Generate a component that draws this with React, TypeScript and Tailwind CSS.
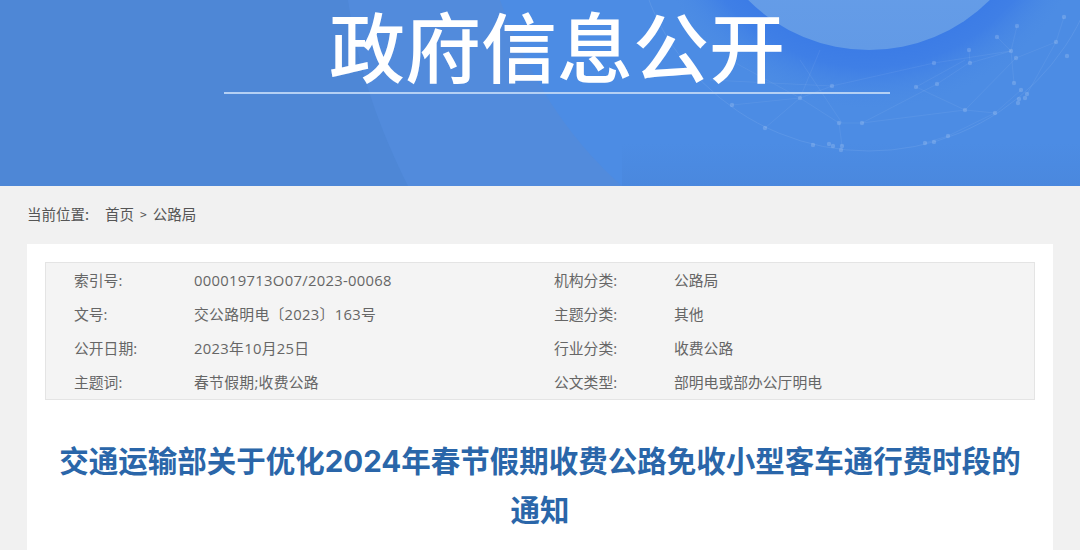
import * as React from "react";

const dots: [number, number][] = [
  [1064, 17], [1017, 26], [997, 37], [1056, 42], [969, 50], [1011, 51], [1016, 58], [934, 63], [970, 63],
  [1067, 56], [1014, 83], [832, 86], [916, 87], [937, 84], [1021, 90], [1027, 94], [1019, 99], [1025, 98],
  [1018, 103], [800, 98], [732, 105], [965, 110], [995, 113], [839, 123], [862, 123], [765, 128], [948, 136],
  [813, 145], [829, 144], [833, 146], [842, 146], [841, 150], [925, 143], [934, 142],
];

const links: [number, number, number, number][] = [
  [800, 98, 839, 123], [800, 98, 765, 128], [839, 123, 842, 146], [839, 123, 862, 123], [862, 123, 937, 84],
  [862, 123, 965, 110], [832, 86, 934, 63], [832, 86, 800, 98], [934, 63, 1011, 51], [970, 63, 1011, 51],
  [1011, 51, 1014, 83], [1016, 58, 965, 110], [970, 63, 969, 50], [937, 84, 969, 63], [965, 110, 995, 113],
  [995, 113, 1021, 90], [916, 87, 965, 110], [1017, 26, 1011, 51], [997, 37, 1011, 51], [1056, 42, 1016, 58],
  [1056, 42, 1064, 17], [1056, 42, 1027, 94], [732, 105, 800, 98], [948, 136, 995, 113], [925, 143, 948, 136],
  [842, 123, 800, 60], [800, 98, 820, 50], [916, 87, 965, 60], [710, 80, 832, 86], [730, 60, 800, 98],
];

const meta = [
  ["索引号:", "000019713O07/2023-00068", "机构分类:", "公路局"],
  ["文号:", "交公路明电〔2023〕163号", "主题分类:", "其他"],
  ["公开日期:", "2023年10月25日", "行业分类:", "收费公路"],
  ["主题词:", "春节假期;收费公路", "公文类型:", "部明电或部办公厅明电"],
];

function BannerArt() {
  return (
    <svg className="absolute inset-0 h-[186px] w-[1080px]" viewBox="0 0 1080 186" fill="none">
      <defs>
        <linearGradient id="sun" x1="0" y1="0" x2="0" y2="1">
          <stop offset="0" stopColor="#72a8ee" />
          <stop offset="1" stopColor="#629ae6" />
        </linearGradient>
        <radialGradient id="halo" gradientUnits="userSpaceOnUse" cx="869" cy="-121" r="230">
          <stop offset="0.74" stopColor="#3c7ce6" />
          <stop offset="0.82" stopColor="#3f7fe6" />
          <stop offset="1" stopColor="#4a8ae4" stopOpacity="0" />
        </radialGradient>
        <linearGradient id="fade" x1="0" y1="0" x2="0" y2="1">
          <stop offset="0.5" stopColor="#4a88de" stopOpacity="0" />
          <stop offset="1" stopColor="#4a88de" />
        </linearGradient>
      </defs>
      <path d="M348 0C358 70 380 130 408 186H1080V0Z" fill="#528bdc" />
      <path d="M500 0C530 80 570 140 622 186H1080V0Z" fill="#4c8ce4" />
      <rect x="622" y="100" width="458" height="86" fill="url(#fade)" />
      <circle cx="869" cy="-121" r="230" fill="url(#halo)" />
      <circle cx="869" cy="-121" r="171" fill="url(#sun)" />
      <circle cx="869" cy="-85" r="236" stroke="#ffffff" strokeOpacity="0.08" />
      {links.map(([x1, y1, x2, y2], i) => (
        <line key={i} x1={x1} y1={y1} x2={x2} y2={y2} stroke="#ffffff" strokeOpacity="0.06" />
      ))}
      {dots.map(([cx, cy], i) => (
        <circle key={i} cx={cx} cy={cy} r="2.2" fill="#ffffff" fillOpacity="0.16" />
      ))}
    </svg>
  );
}

export default function App() {
  return (
    <div className="h-[550px] w-[1080px] overflow-hidden bg-[#f1f1f1] font-['Noto_Sans_CJK_SC','Noto_Sans',sans-serif]">
      <header className="relative flex h-[186px] flex-col items-center bg-[#4e87d6] pl-[34px]">
        <BannerArt />
        <h1 className="relative mt-[2px] text-[76px] leading-[84px] font-medium text-white">政府信息公开</h1>
        <div className="relative mt-[6px] h-[2px] w-[666px] bg-[#b4d0f4]" />
      </header>

      <nav className="flex h-[56px] items-center px-[27px] text-[14.5px] text-[#555555]">
        <span>当前位置:</span>
        <span className="ml-[16px]">首页</span>
        <span className="mx-[6px] text-[12px]">&gt;</span>
        <span>公路局</span>
      </nav>

      <main className="mx-[27px] mt-[2px] h-[400px] bg-white px-[18px] pt-[18px]">
        <div className="border border-[#e4e4e4] bg-[#f4f4f4] px-[28px]">
          {meta.map((row) => (
            <div key={row[0]} className="flex h-[34px] items-center font-['Open_Sans','Noto_Sans_CJK_SC',sans-serif] text-[14.8px] text-[#666666]">
              <span className="w-[120px]">{row[0]}</span>
              <span className="w-[360px] tracking-[0.3px]">{row[1]}</span>
              <span className="w-[120px]">{row[2]}</span>
              <span>{row[3]}</span>
            </div>
          ))}
        </div>
        <h2 className="mx-auto mt-[37px] w-[975px] text-center font-['Inter','Noto_Sans_CJK_SC',sans-serif] text-[29.5px] leading-[49px] font-bold text-[#2a66a9]">
          交通运输部关于优化2024年春节假期收费公路免收小型客车通行费时段的通知
        </h2>
      </main>
    </div>
  );
}
